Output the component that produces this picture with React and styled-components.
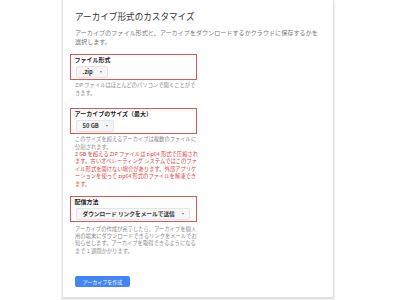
import React from 'react'
import styled, { createGlobalStyle } from 'styled-components'

const GlobalStyle = createGlobalStyle`
  body {
    margin: 0;
    background: #ffffff;
    font-family: 'Noto Sans CJK JP', 'Noto Sans', sans-serif;
  }
`

const Page = styled.div`
  width: 400px;
  height: 300px;
  padding-left: 62px;
  box-sizing: border-box;
  overflow: hidden;
`

const Card = styled.div`
  width: 272px;
  height: 298px;
  box-sizing: border-box;
  background: #fff;
  border: 1px solid #e2e2e2;
  border-top: none;
  box-shadow: 0 1px 2px rgba(0, 0, 0, 0.18);
  padding: 10px 12px 0;
  display: flex;
  flex-direction: column;
  align-items: flex-start;
`

const Title = styled.h2`
  margin: 0;
  font-size: 8.6px;
  line-height: 12px;
  font-weight: 400;
  color: #333;
`

const Description = styled.p`
  margin: 5.5px 0 0;
  font-size: 6.1px;
  line-height: 9px;
  color: #777;
`

const FieldBox = styled.div`
  margin: ${p => p.$top}px 0 0 -5px;
  width: 127px;
  box-sizing: border-box;
  border: 1.5px solid #de5757;
  padding: 0.5px 3.5px 1.5px;
  display: flex;
  flex-direction: column;
  align-items: flex-start;
`

const Label = styled.div`
  font-size: 6px;
  line-height: 8px;
  font-weight: 700;
  color: #222;
`

const Select = styled.div`
  margin: 2px 0 0 1px;
  height: 12px;
  box-sizing: border-box;
  padding: 0 5px 0 6px;
  display: flex;
  align-items: center;
  gap: 7px;
  background: #f6f6f6;
  border: 1px solid #e4e4e4;
  border-radius: 2px;
  font-size: ${p => p.$size || 5.8}px;
  font-weight: 700;
  color: #333;
`

const Caret = styled.span`
  width: 0;
  height: 0;
  border-left: 1.5px solid transparent;
  border-right: 1.5px solid transparent;
  border-top: 2px solid #777;
`

const Hint = styled.p`
  margin: ${p => p.$top || 2.2}px 0 0;
  width: 124.5px;
  font-size: 5.3px;
  line-height: 7.4px;
  color: #888;
`

const Warning = styled.span`
  display: block;
  color: #d84040;
`

const CreateButton = styled.button`
  margin-top: 21px;
  width: 55px;
  height: 11px;
  padding: 0;
  border: none;
  border-radius: 2px;
  background: #4285f4;
  color: #fff;
  font-family: inherit;
  font-size: 5px;
  line-height: 11px;
`

export default function App() {
  return (
    <Page>
      <GlobalStyle />
      <Card>
        <Title>アーカイブ形式のカスタマイズ</Title>
        <Description>
          アーカイブのファイル形式と、アーカイブをダウンロードするかクラウドに保存するかを選択します。
        </Description>

        <FieldBox $top={8.5}>
          <Label>ファイル形式</Label>
          <Select>.zip<Caret /></Select>
        </FieldBox>
        <Hint>ZIP ファイルはほとんどのパソコンで開くことができます。</Hint>

        <FieldBox $top={11}>
          <Label>アーカイブのサイズ（最大）</Label>
          <Select>50 GB<Caret /></Select>
        </FieldBox>
        <Hint>
          このサイズを超えるアーカイブは複数のファイルに分割されます。
          <Warning>
            2 GB を超える ZIP ファイルは zip64 形式で圧縮されます。古いオペレーティング システムではこのファイル形式を開けない場合があります。外部アプリケーションを使って zip64 形式のファイルを解凍できます。
          </Warning>
        </Hint>

        <FieldBox $top={8}>
          <Label>配信方法</Label>
          <Select $size={5.7}>ダウンロード リンクをメールで送信<Caret /></Select>
        </FieldBox>
        <Hint $top={3.5}>
          アーカイブの作成が完了したら、アーカイブを個人用の端末にダウンロードできるリンクをメールでお知らせします。アーカイブを取得できるようになるまで 1 週間かかります。
        </Hint>

        <CreateButton>アーカイブを作成</CreateButton>
      </Card>
    </Page>
  )
}
